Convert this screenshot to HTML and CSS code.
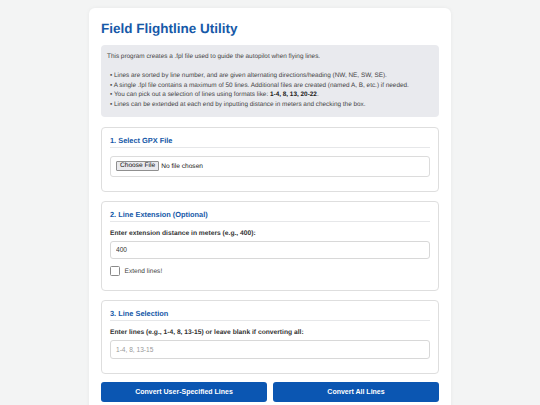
FILE: index.html
```html
<!DOCTYPE html>
<html>
<head>
<meta charset="utf-8">
<title>Field Flightline Utility</title>
<link rel="stylesheet" href="styles.css">
</head>
<body>
<div class="container">
  <h1 class="title">Field Flightline Utility</h1>
  <div class="info">
    <div class="info-line">This program creates a .fpl file used to guide the autopilot when flying lines.</div>
    <div class="info-blank"></div>
    <div class="info-line bullet">• Lines are sorted by line number, and are given alternating directions/heading (NW, NE, SW, SE).</div>
    <div class="info-line bullet">• A single .fpl file contains a maximum of 50 lines. Additional files are created (named A, B, etc.) if needed.</div>
    <div class="info-line bullet">• You can pick out a selection of lines using formats like: <b>1-4, 8, 13, 20-22</b>.</div>
    <div class="info-line bullet">• Lines can be extended at each end by inputting distance in meters and checking the box.</div>
  </div>

  <div class="section">
    <h2 class="section-title">1. Select GPX File</h2>
    <div class="file-box">
      <span class="file-btn">Choose File</span><span class="file-text">No file chosen</span>
    </div>
  </div>

  <div class="section">
    <h2 class="section-title">2. Line Extension (Optional)</h2>
    <div class="label">Enter extension distance in meters (e.g., 400):</div>
    <input class="text-input" type="text" value="400">
    <label class="check-row"><span class="check-box"></span><span class="check-text">Extend lines!</span></label>
  </div>

  <div class="section">
    <h2 class="section-title">3. Line Selection</h2>
    <div class="label">Enter lines (e.g., 1-4, 8, 13-15) or leave blank if converting all:</div>
    <input class="text-input" type="text" placeholder="1-4, 8, 13-15">
  </div>

  <div class="buttons">
    <button class="btn">Convert User-Specified Lines</button>
    <button class="btn">Convert All Lines</button>
  </div>
</div>
</body>
</html>
```

FILE: styles.css
```css
html, body {
  margin: 0;
  padding: 0;
}
body {
  background: #f3f4f4;
  font-family: "Liberation Sans", Arial, sans-serif;
  color: #333;
  text-rendering: geometricPrecision;
}
.container {
  width: 338px;
  margin: 8px auto 0;
  padding: 12px 12px 20px;
  background: #ffffff;
  border-radius: 6px;
  box-shadow: 0 0 4px rgba(0,0,0,0.05);
}
.title {
  margin: 0 0 7px;
  font-size: 13.5px;
  line-height: 18px;
  font-weight: bold;
  color: #1659a8;
}
.info {
  background: #e9eaee;
  border-radius: 4px;
  padding: 7px 7px 7px 6px;
  font-size: 6.4px;
  line-height: 9.6px;
  color: #444;
}
.info-blank {
  height: 9.6px;
}
.info-line.bullet {
  padding-left: 3px;
}
.info b {
  color: #222;
}
.section {
  margin-top: 10px;
  border: 1px solid #dedede;
  border-radius: 4px;
  padding: 8px 8px 8px;
}
.section + .section {
  margin-top: 9px;
}
.section-title {
  margin: 0 0 8px;
  padding: 0 0 2px;
  border-bottom: 1px solid #e6e7e9;
  font-size: 7.4px;
  line-height: 9px;
  font-weight: bold;
  color: #1659a8;
}
.file-box {
  height: 19px;
  border: 1px solid #dcdcdc;
  border-radius: 3px;
  padding: 0 5px;
  margin-bottom: 6px;
  display: flex;
  align-items: center;
}
.file-btn {
  display: inline-block;
  padding: 0 3px;
  height: 7.5px;
  line-height: 7.5px;
  border: 1px solid #8f8f8f;
  border-radius: 1px;
  background: #e9e9ed;
  color: #111;
  font-size: 6.6px;
}
.file-text {
  margin-left: 2px;
  color: #222;
  font-size: 6.6px;
}
.label {
  font-size: 6.7px;
  line-height: 7px;
  font-weight: bold;
  color: #333;
  margin-bottom: 4px;
}
.section-title + .label {
  margin-top: 7px;
}
.text-input {
  display: block;
  box-sizing: border-box;
  width: 100%;
  height: 18.5px;
  margin: 0 0 6px;
  padding: 0 5px;
  border: 1px solid #d8d8d8;
  border-radius: 3px;
  font-family: "Liberation Sans", Arial, sans-serif;
  font-size: 6.6px;
  color: #333;
  outline: none;
}
.text-input::placeholder {
  color: #9a9a9a;
}
.check-row {
  display: flex;
  align-items: center;
  margin-top: 7px;
  margin-bottom: 6px;
}
.check-box {
  box-sizing: border-box;
  width: 10px;
  height: 10px;
  border: 1px solid #8a8a8a;
  border-radius: 1.5px;
  background: #fff;
}
.check-text {
  margin-left: 4.5px;
  font-size: 6.6px;
  color: #444;
}
.buttons {
  display: grid;
  grid-template-columns: 1fr 1fr;
  gap: 6px;
  margin-top: 8px;
}
.btn {
  height: 20px;
  border: none;
  border-radius: 3px;
  background: #0b56b2;
  color: #fff;
  font-family: "Liberation Sans", Arial, sans-serif;
  font-size: 7px;
  font-weight: bold;
  padding: 0;
}
```
